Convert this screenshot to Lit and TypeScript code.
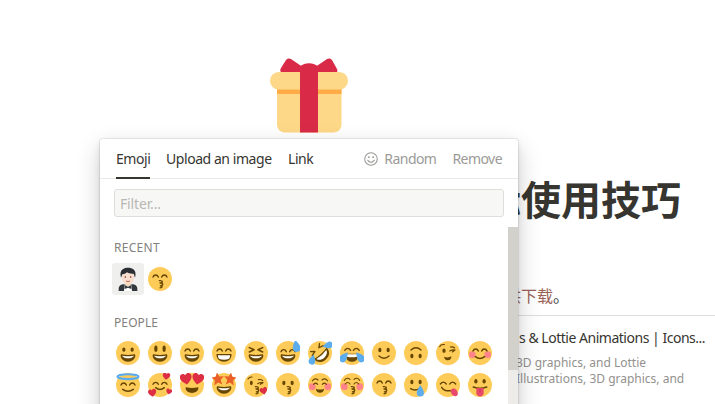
import { LitElement, html, svg, css } from "lit";
import { customElement } from "lit/decorators.js";

const D = "#664500";
const base = svg`<circle cx="18" cy="18" r="18" fill="#fdcb58"/>`;
const line = (d: string, w = 2) =>
  svg`<path d=${d} fill="none" stroke=${D} stroke-width=${w} stroke-linecap="round" stroke-linejoin="round"/>`;
const fill = (d: string, c = D) => svg`<path d=${d} fill=${c}/>`;
const eyes = (y = 13, ry = 3.4) => svg`
  <ellipse cx="11.8" cy=${y} rx="2.4" ry=${ry} fill=${D}/>
  <ellipse cx="24.2" cy=${y} rx="2.4" ry=${ry} fill=${D}/>`;
const arcs = (y = 15) =>
  line(`M7.5 ${y}q1.2-3 4-3t4 3M20.5 ${y}q1.2-3 4-3t4 3`, 2.1);
const grin = svg`
  ${fill("M18 21c-3.6 0-6-.4-9-1-.7-.1-2 0-2 2 0 4 4.6 9 11 9s11-5 11-9c0-2-1.3-2.1-2-2-3 .6-5.4 1-9 1z")}
  ${fill("M9 22s3 1 9 1 9-1 9-1-2 4-9 4-9-4-9-4z", "#fff")}`;
const beam = svg`
  ${fill("M8 19.5h20c1 0 1.5.7 1.3 2C28.500 28 24 31 18 31S7.500 28 6.700 21.500c-.2-1.300.3-2 1.300-2z")}
  ${fill("M9 21.500h18v2q-.3 2-2 3.500-3 1-7 1t-7-1q-1.700-1.500-2-3.500z", "#fff")}`;
const smile = line("M10.500 22.500q7.500 6.500 15 0", 2.2);
const kiss = line("M17 20.500c6-.5 6 3 1 3.500 6 0 5 4 .5 4.200 4 .2 3.500 3-.5 3", 1.9);
const blush = svg`
  <circle cx="6.500" cy="20.500" r="5" fill="#ff7892" opacity=".85"/>
  <circle cx="29.500" cy="20.500" r="5" fill="#ff7892" opacity=".85"/>`;
const heart = (x: number, y: number, s: number, r = 0) => svg`
  <path transform="translate(${x} ${y}) rotate(${r}) scale(${s})" fill="#dd2e44"
    d="M0 8C-5 4-8.500 1-8.500-3c0-5 6-7 8.500-2.500C2.500-10 8.500-8 8.500-3 8.500 1 5 4 0 8z"/>`;
const star = (x: number, r: number) => svg`
  <path transform="translate(${x} 9) rotate(${r})" fill="#e95f28"
    d="M0-10l2.700 6.500 7 .5-5.300 4.500L6 9 0 5.300-6 9l1.600-7.500-5.300-4.500 7-.5z"/>`;
const drop = (x: number, y: number, r: number, s = 1) => svg`
  <path transform="translate(${x} ${y}) rotate(${r}) scale(${s})" fill="#5dadec"
    d="M0-9C3-4 5.500-1 5.500 3a5.500 5.500 0 0 1-11 0C-5.500-1-3-4 0-9z"/>`;

const kissingSmile = svg`${base}${arcs()}${kiss}`;

const people = [
  svg`${base}${eyes(13, 3.2)}${grin}`,
  svg`${base}${eyes(11.5, 4.8)}${grin}`,
  svg`${base}${arcs()}${grin}`,
  svg`${base}${arcs()}${beam}`,
  svg`${base}${line("M8 10l7 3.200-7 3.300M28 10l-7 3.200 7 3.300", 2.3)}${grin}`,
  svg`${base}${arcs(16)}${grin}${drop(30.5, 7.5, -10, 1.05)}`,
  svg`${base}<g transform="rotate(-42 18 18)">${line("M9 7l5 4-7 2M27 7l-5 4 7 2", 2)}
    ${fill("M5 18.500q13 3 26 0c0 8-5 12.500-13 12.500S5 26.500 5 18.500z")}${fill("M8 21q10 2.500 20 0c-1 4.500-5.500 6.500-10 6.500S9 25.500 8 21z", "#fff")}</g>
    ${drop(6.5, 28, 14, 0.9)}${drop(29.5, 6.5, -104, 0.9)}`,
  svg`${base}${line("M7 14q4.500-6 9 0M20 14q4.500-6 9 0")}
    ${fill("M9 19h18c1 8-3 12-9 12S8 27 9 19z")}${fill("M10.500 20h15v3.500q-7.500 2-15 0z", "#fff")}
    ${drop(6, 24, 38, 1)}${drop(30, 24, -38, 1)}`,
  svg`${base}${eyes(13.5)}${smile}`,
  svg`${base}<g transform="rotate(180 18 18)">${eyes(13.5)}${smile}</g>`,
  svg`${base}<ellipse cx="12" cy="14.500" rx="2.400" ry="3.300" fill=${D}/>
    ${line("M5.500 8.500q2-4 7-3M21.500 9q4-1 6.500 1.500M20.500 15q4-2.500 8-1.500l-4 3", 1.7)}
    ${fill("M12 23.500q6 2.500 11-.5c0 4-2 6-5 6s-5.500-2-6-5.500z")}`,
  svg`${base}${blush}${arcs()}${line("M11 23.500q7 5.500 14 0", 2.2)}`,
  svg`${base}${arcs(18)}${line("M10 24.500q8 6 16 0", 2.2)}
    <ellipse cx="18" cy="5.500" rx="15.800" ry="3.600" fill="none" stroke="#5dadec" stroke-width="3.200"/>`,
  svg`${base}${arcs(17)}${line("M11.500 22q6.500 5.500 13 0", 2.2)}
    ${heart(27.5, 5, 0.66, 8)}${heart(6.5, 30, 0.72, -10)}${heart(31.5, 28, 0.52, 15)}`,
  svg`${base}${fill("M9 21.500q9 2 18 0c1.500 0 1 8-9 8.500-10-.5-10.500-8.500-9-8.500z")}
    ${heart(9, 9, 1.05, -10)}${heart(27, 9, 1.05, 10)}`,
  svg`${base}${grin}${star(8.5, -6)}${star(27.5, 6)}`,
  svg`${base}<ellipse cx="11" cy="15" rx="2.200" ry="3.200" fill=${D}/>
    ${line("M6 9q2-3.500 6-3M21.500 10q4-1 6.500 1.500M20.500 16q4-2.500 8-1.500l-4 2.500", 1.7)}${kiss}${heart(29.5, 27, 0.66, -14)}`,
  svg`${base}${eyes(15, 3.2)}${kiss}`,
  svg`${base}${blush}${line("M6.500 12q4-5.500 8.500-1.500M21 10.500q4.500-4 8.500 1.500M8.500 17q3-3.500 6 0M21.500 17q3-3.500 6 0", 1.7)}
    ${fill("M12 23.500q6 2.500 12 0c0 4-2.500 6-6 6s-6-2-6-6z")}`,
  svg`${base}${blush}${line("M6.500 11q4-5.500 8.500-1.500M21 9.500q4.500-4 8.500 1.500M8 16.500q3.500-4.500 7 0M21 16.500q3.500-4.500 7 0", 1.7)}${kiss}`,
  kissingSmile,
  svg`${base}${eyes(13.5)}${line("M10 23.500q7 4.500 14-1", 2.2)}${drop(24.5, 27, 0, 0.98)}`,
  svg`${base}${line("M6.500 16.500q4.500-5.500 9 0M20.500 16.500q4.500-5.500 9 0")}${line("M8.500 21.500q4 6.500 15 5", 2.2)}
    ${fill("M22 26c2-4 7-3.500 9 0s3 7-.5 8.500S22 32.500 22 26z", "#e8496a")}`,
  svg`${base}${eyes(12.5)}${line("M8 21q10 4 20 0", 2.4)}
    ${fill("M12.500 22.500h11V30c0 7-11 7-11 0z", "#e8496a")}${fill("M17.500 23.500h1v5.500h-1z", "#b02a48")}`,
];

const groom = svg`
  <path d="M4 36v-3c0-5 4-7 8-7h12c4 0 8 2 8 7v3z" fill="#31373d"/>
  <path d="M14 23h8v4l-4 5-4-5z" fill="#f3d2a2"/>
  <path d="M13 26l5 3 5-3 1 10H12z" fill="#fff"/>
  <path d="M9 9c0-6 18-6 18 0v7c0 6-4 10-9 10s-9-4-9-10z" fill="#f7dece"/>
  <path d="M7.500 16C4 3 13 1 18 1c6 0 14 3 10.500 15l-2-6c-4 1-8-1-10-2-2 2-4 3-7 3z" fill="#292f33"/>
  <circle cx="14" cy="15" r="1.100" fill="#662113"/><circle cx="22" cy="15" r="1.100" fill="#662113"/>
  <path d="M15 21q3 2 6 0" fill="none" stroke="#c1694f" stroke-width="1.500"/>
  <path d="M13 27l5 2.500 5-2.500v6l-5-2-5 2z" fill="#31373d"/>`;

const icon = (g: unknown) => html`<svg class="emoji" viewBox="0 0 36 36">${g}</svg>`;

@customElement("emoji-picker")
export class EmojiPicker extends LitElement {
  static styles = css`
    :host { display: flex; flex-direction: column; box-sizing: border-box; background: #fff;
      border-radius: 3px; overflow: hidden; color: #37352f;
      box-shadow: 0 0 0 1px rgba(15,15,15,.07), 0 3px 6px rgba(15,15,15,.1), 0 9px 24px rgba(15,15,15,.2); }
    .tabs { display: flex; height: 39px; flex: none; border-bottom: 1px solid #e9e9e7; padding: 0 16px; gap: 16px;
      font-size: 14px; line-height: 40px; white-space: nowrap; letter-spacing: -.44px; }
    .tab { box-sizing: border-box; height: 40px; }
    .active { border-bottom: 2px solid #37352f; width: 34px; }
    .upload { width: 106px; }
    .grow { flex: 1; }
    .muted { color: #9b9a97; display: flex; align-items: center; gap: 6px; letter-spacing: -.55px; }
    .smiley { width: 14px; height: 14px; }
    .filter { flex: none; box-sizing: border-box; height: 28px; margin: 10px 14px 10px 14px; border: 1px solid #dededc;
      border-radius: 3px; background: #f7f7f5; color: #b8b7b4; font-size: 14px; line-height: 27px; padding-left: 5px;
      letter-spacing: -.15px; }
    .body { display: flex; flex: 1; min-height: 0; }
    .list { flex: 1; padding-left: 12px; }
    .heading { font-size: 12px; line-height: 16px; color: #82817d; padding: 13px 2px 7px; letter-spacing: .3px; }
    .people { padding: 14px 2px 6px; letter-spacing: .1px; }
    .grid { display: grid; grid-template-columns: repeat(12, 32px); grid-auto-rows: 32px; }
    .recent { margin-bottom: 6px; }
    .cell { display: flex; align-items: center; justify-content: center; border-radius: 3px; }
    .selected { background: #efefee; }
    .emoji { width: 24px; height: 24px; display: block; }
    .track { width: 10px; background: #edece9; }
    .thumb { height: 143px; background: #d3d1cb; }
  `;
  render() {
    return html`
      <div class="tabs">
        <div class="tab active">Emoji</div>
        <div class="tab upload">Upload an image</div>
        <div class="tab">Link</div>
        <div class="grow"></div>
        <div class="tab muted">
          <svg class="smiley" viewBox="0 0 14 14" fill="none" stroke="#9b9a97" stroke-width="1.100" stroke-linecap="round">
            <circle cx="7" cy="7" r="6.300"/><path d="M3.800 8.300q3.200 4 6.400 0"/>
            <circle cx="4.900" cy="5.200" r=".9" fill="#9b9a97" stroke="none"/><circle cx="9.100" cy="5.200" r=".9" fill="#9b9a97" stroke="none"/>
          </svg>
          <span>Random</span>
        </div>
        <div class="tab muted">Remove</div>
      </div>
      <div class="filter">Filter...</div>
      <div class="body">
        <div class="list">
          <div class="heading">RECENT</div>
          <div class="grid recent">
            <div class="cell selected">${icon(groom)}</div>
            <div class="cell">${icon(kissingSmile)}</div>
          </div>
          <div class="heading people">PEOPLE</div>
          <div class="grid">${people.map((p) => html`<div class="cell">${icon(p)}</div>`)}</div>
        </div>
        <div class="track"><div class="thumb"></div></div>
      </div>`;
  }
}

@customElement("app-root")
export class AppRoot extends LitElement {
  static styles = css`
    :host { display: block; position: relative; box-sizing: border-box; width: 715px; height: 404px; overflow: hidden;
      background: #fff; color: #37352f; font-family: "Noto Sans", "Noto Sans CJK SC", sans-serif; }
    .page { display: flex; flex-direction: column; padding-top: 58px; white-space: nowrap; }
    .gift { width: 78px; height: 75px; margin-left: 270px; }
    .title { margin: 35px 0 0 441px; font: 700 40px/60px "Noto Sans CJK SC", sans-serif; }
    .note { margin: 55px 0 0 505px; font: 16px/24px "Noto Sans CJK SC", sans-serif; height: 32px; }
    .link { color: #9a6257; }
    .card { border-top: 1px solid #dededd; margin-left: 200px; padding: 11px 0 0 319px; }
    .name { font-size: 14px; line-height: 21px; letter-spacing: -.48px; }
    .desc { margin: 7px 0 0 -3px; font-size: 12px; line-height: 16px; color: #92918e; }
    .picker { position: absolute; left: 100px; top: 139px; width: 418px; height: 290px; }
  `;
  render() {
    return html`
      <div class="page">
        <svg class="gift" viewBox="0 0 78 75">
          <path d="M7 28h64.500v38.500a8 8 0 0 1-8 8H15a8 8 0 0 1-8-8z" fill="#fdd888"/>
          <rect x="7" y="31" width="64.500" height="5" fill="#ffac48"/>
          <rect y="14" width="78" height="17.500" rx="8.700" fill="#fdd888"/>
          <path d="M11 14c-1-1-1-2 0-4l5-8c1-1.500 3-2 5-1l11 7.500c4-3 10-3 14 0l11-7.500c2-1 4-.5 5 1l5 9c.7 1.500.5 2.500 0 3z" fill="#d92b48"/>
          <path d="M30 9c3-5 15-5 18 0v65.500H30z" fill="#d92b48"/>
        </svg>
        <div class="title">图标使用技巧</div>
        <div class="note"><span class="link">供下载</span>。</div>
        <div class="card">
          <div class="name">s &amp; Lottie Animations | Icons...</div>
          <div class="desc">3D graphics, and Lottie<br>Illustrations, 3D graphics, and</div>
        </div>
      </div>
      <emoji-picker class="picker"></emoji-picker>`;
  }
}
